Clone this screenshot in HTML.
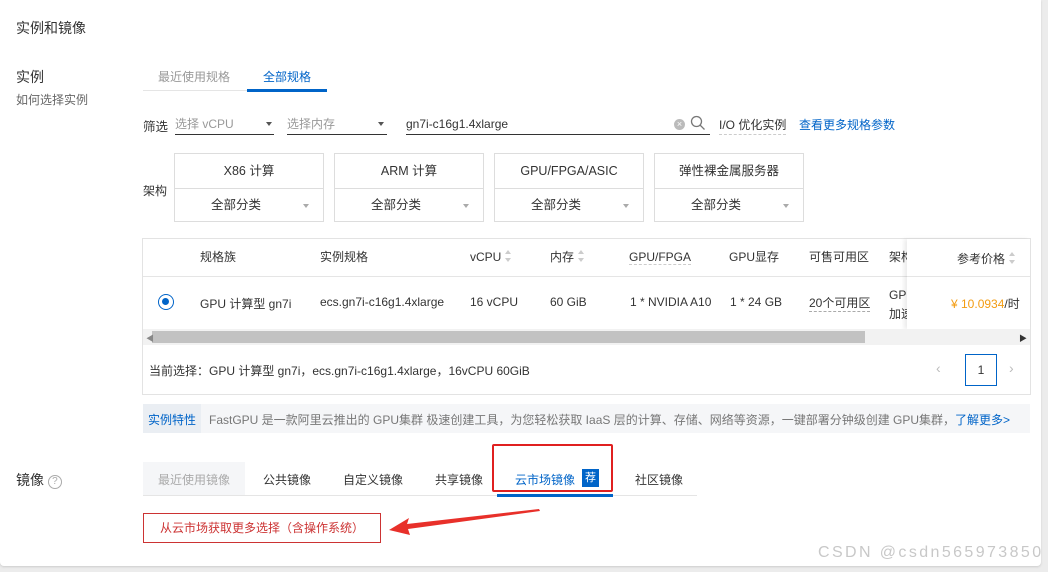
<!DOCTYPE html>
<html><head><meta charset="utf-8"><style>
*{margin:0;padding:0;box-sizing:border-box}
body{width:1048px;height:572px;background:#ececec;font-family:"Liberation Sans","Noto Sans CJK SC",sans-serif;font-size:12px;color:#333;position:relative;overflow:hidden}
.card{position:absolute;left:0;top:0;width:1041px;height:566px;background:#fff;border-radius:0 0 4px 4px;box-shadow:0 1px 2px #ccc}
.a{position:absolute;white-space:nowrap}
.blue{color:#0064c8}
.sel{position:absolute;border-bottom:1px solid #333;height:20px;color:#999}
.tri{position:absolute;width:0;height:0;border-left:3px solid transparent;border-right:3px solid transparent;border-top:4px solid #555}
.box{position:absolute;border:1px solid #ddd;width:150px;height:69px}
.box .t{height:35px;border-bottom:1px solid #ddd;text-align:center;line-height:35px;font-size:12.5px}
.box .b{text-align:center;line-height:33px;padding-right:26px;font-size:12.5px}
.box .tri{border-top-color:#aaa;left:128px;top:50px}
.th{position:absolute;top:250px;font-size:12px;color:#333;line-height:14px}
.td{position:absolute;top:295px;font-size:12px;color:#333}
.sort{display:inline-block;vertical-align:-1px;margin-left:4px;width:8px;height:12px;position:relative}
.sort:before{content:"";position:absolute;top:0;left:0;border:3.5px solid transparent;border-bottom:4px solid #ccc;border-top:0}
.sort:after{content:"";position:absolute;bottom:0;left:0;border:3.5px solid transparent;border-top:4px solid #ccc;border-bottom:0}
.tab{position:absolute;top:471px;font-size:12px}
</style></head><body>
<div class="card">
<div class="a" style="left:16px;top:18px;font-size:14px;color:#333">实例和镜像</div>
<div class="a" style="left:16px;top:67px;font-size:14px">实例</div>
<div class="a" style="left:16px;top:91px;color:#666">如何选择实例</div>
<div class="a" style="left:158px;top:68px;color:#999">最近使用规格</div>
<div class="a blue" style="left:263px;top:68px">全部规格</div>
<div class="a" style="left:143px;top:90px;width:184px;height:1px;background:#e5e5e5"></div>
<div class="a" style="left:247px;top:89px;width:80px;height:3px;background:#0064c8"></div>

<div class="a" style="left:143px;top:116px;font-size:12.5px">筛选</div>
<div class="sel" style="left:175px;top:115px;width:99px">选择 vCPU</div><div class="tri" style="left:266px;top:122px"></div>
<div class="sel" style="left:287px;top:115px;width:100px">选择内存</div><div class="tri" style="left:378px;top:122px"></div>
<div class="sel" style="left:406px;top:115px;width:304px;color:#333;padding-top:2px">gn7i-c16g1.4xlarge</div>
<div class="a" style="left:674px;top:119px;width:11px;height:11px;border-radius:50%;background:#bbb;color:#fff;font-size:9px;line-height:11px;text-align:center">×</div>
<svg class="a" style="left:690px;top:115px" width="16" height="16"><circle cx="6.5" cy="6.5" r="5" fill="none" stroke="#777" stroke-width="1.3"/><line x1="10" y1="10" x2="14.5" y2="14.5" stroke="#777" stroke-width="1.3"/></svg>
<div class="a" style="left:719px;top:116px;color:#333;border-bottom:1px dashed #ccc;padding-bottom:1px">I/O 优化实例</div>
<div class="a blue" style="left:799px;top:116px">查看更多规格参数</div>

<div class="a" style="left:143px;top:182px">架构</div>
<div class="box" style="left:174px;top:153px"><div class="t">X86 计算</div><div class="b">全部分类</div><div class="tri"></div></div>
<div class="box" style="left:334px;top:153px"><div class="t">ARM 计算</div><div class="b">全部分类</div><div class="tri"></div></div>
<div class="box" style="left:494px;top:153px"><div class="t">GPU/FPGA/ASIC</div><div class="b">全部分类</div><div class="tri"></div></div>
<div class="box" style="left:654px;top:153px"><div class="t">弹性裸金属服务器</div><div class="b">全部分类</div><div class="tri"></div></div>

<div class="a" style="left:142px;top:238px;width:889px;height:157px;border:1px solid #e3e3e3"></div>
<div class="a" style="left:143px;top:276px;width:887px;height:1px;background:#e5e5e5"></div>
<div class="th" style="left:200px">规格族</div>
<div class="th" style="left:320px">实例规格</div>
<div class="th" style="left:470px">vCPU<span class="sort"></span></div>
<div class="th" style="left:550px">内存<span class="sort"></span></div>
<div class="th" style="left:629px;border-bottom:1px dashed #ccc">GPU/FPGA</div>
<div class="th" style="left:729px">GPU显存</div>
<div class="th" style="left:809px">可售可用区</div>
<div class="th" style="left:889px">架构</div>
<div class="a" style="left:158px;top:294px;width:16px;height:16px;border:1.5px solid #0064c8;border-radius:50%"><div style="margin:3px;width:7px;height:7px;border-radius:50%;background:#0064c8"></div></div>
<div class="td" style="left:200px">GPU 计算型 gn7i</div>
<div class="td" style="left:320px">ecs.gn7i-c16g1.4xlarge</div>
<div class="td" style="left:470px">16 vCPU</div>
<div class="td" style="left:550px">60 GiB</div>
<div class="td" style="left:630px">1 * NVIDIA A10</div>
<div class="td" style="left:730px">1 * 24 GB</div>
<div class="td" style="left:809px;top:294px;border-bottom:1px dashed #aaa">20个可用区</div>
<div class="a" style="left:889px;top:286px;line-height:19px">GPU<br>加速</div>
<div class="a" style="left:907px;top:239px;width:123px;height:90px;background:#fff;box-shadow:-3px 0 4px rgba(0,0,0,.08)"></div>
<div class="a" style="left:907px;top:276px;width:123px;height:1px;background:#e5e5e5"></div>
<div class="a" style="left:957px;top:250px">参考价格<span class="sort"></span></div>
<div class="a" style="left:951px;top:295px"><span style="color:#f39c12">¥ 10.0934</span>/时</div>
<div class="a" style="left:143px;top:329px;width:887px;height:16px;background:#f2f2f2"></div>
<div class="a" style="left:152px;top:331px;width:713px;height:12px;background:#c2c2c2"></div>
<div class="a" style="left:146px;top:333px;color:#888;font-size:8px">◀</div>
<div class="a" style="left:1019px;top:333px;color:#333;font-size:8px">▶</div>
<div class="a" style="left:149px;top:362px">当前选择：GPU 计算型 gn7i，ecs.gn7i-c16g1.4xlarge，16vCPU 60GiB</div>
<div class="a" style="left:936px;top:360px;color:#bbb;font-size:14px">‹</div>
<div class="a" style="left:965px;top:354px;width:32px;height:32px;border:1px solid #0064c8;text-align:center;line-height:30px;color:#333">1</div>
<div class="a" style="left:1009px;top:360px;color:#bbb;font-size:14px">›</div>

<div class="a" style="left:143px;top:404px;width:887px;height:29px;background:#f5f6f8"></div>
<div class="a" style="left:143px;top:404px;width:58px;height:29px;background:#eaeef3"></div>
<div class="a blue" style="left:148px;top:411px">实例特性</div>
<div class="a" style="left:209px;top:411px;color:#777">FastGPU 是一款阿里云推出的 GPU集群 极速创建工具，为您轻松获取 IaaS 层的计算、存储、网络等资源，一键部署分钟级创建 GPU集群，<span class="blue">了解更多&gt;</span></div>

<div class="a" style="left:16px;top:470px;font-size:14px">镜像 <span style="display:inline-block;width:14px;height:14px;border:1px solid #aaa;border-radius:50%;font-size:10px;line-height:12px;text-align:center;color:#aaa;vertical-align:1px">?</span></div>
<div class="a" style="left:143px;top:462px;width:102px;height:33px;background:#f5f6f8"></div>
<div class="a" style="left:143px;top:495px;width:554px;height:1px;background:#e5e5e5"></div>
<div class="tab" style="left:158px;color:#aaa">最近使用镜像</div>
<div class="tab" style="left:263px">公共镜像</div>
<div class="tab" style="left:343px">自定义镜像</div>
<div class="tab" style="left:435px">共享镜像</div>
<div class="tab blue" style="left:515px">云市场镜像</div>
<div class="a" style="left:582px;top:469px;width:17px;height:18px;background:#0064c8;color:#fff;font-size:11px;text-align:center;line-height:18px">荐</div>
<div class="tab" style="left:635px">社区镜像</div>
<div class="a" style="left:497px;top:494px;width:116px;height:3px;background:#0064c8"></div>
<div class="a" style="left:492px;top:444px;width:121px;height:48px;border:2px solid #e02020;border-radius:2px"></div>

<div class="a" style="left:143px;top:513px;width:238px;height:30px;border:1px solid #c33;color:#c33;text-align:center;line-height:28px">从云市场获取更多选择（含操作系统）</div>
<svg class="a" style="left:385px;top:505px" width="160" height="35"><polygon points="4,25 24,13 22,19 154,4 155,6 23,24 25,30" fill="#e8302a"/></svg>
<div class="a" style="left:818px;top:544px;font-size:16px;letter-spacing:2.4px;color:#c8c8c8">CSDN @csdn565973850</div>
</div>
</body></html>
